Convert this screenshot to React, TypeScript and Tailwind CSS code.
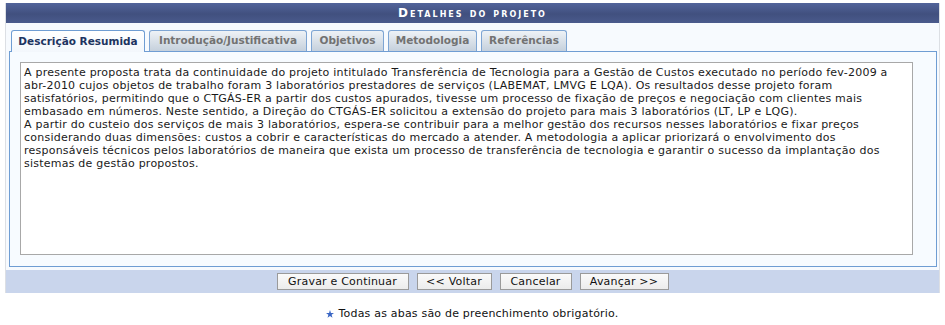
import React from "react";

const lines = [
  "A presente proposta trata da continuidade do projeto intitulado Transferência de Tecnologia para a Gestão de Custos executado no período fev-2009 a",
  "abr-2010 cujos objetos de trabalho foram 3 laboratórios prestadores de serviços (LABEMAT, LMVG E LQA). Os resultados desse projeto foram",
  "satisfatórios, permitindo que o CTGÁS-ER a partir dos custos apurados, tivesse um processo de fixação de preços e negociação com clientes mais",
  "embasado em números. Neste sentido, a Direção do CTGÁS-ER solicitou a extensão do projeto para mais 3 laboratórios (LT, LP e LQG).",
  "A partir do custeio dos serviços de mais 3 laboratórios, espera-se contribuir para a melhor gestão dos recursos nesses laboratórios e fixar preços",
  "considerando duas dimensões: custos a cobrir e características do mercado a atender. A metodologia a aplicar priorizará o envolvimento dos",
  "responsáveis técnicos pelos laboratórios de maneira que exista um processo de transferência de tecnologia e garantir o sucesso da implantação dos",
  "sistemas de gestão propostos.",
];

const tabs = [
  { label: "Descrição Resumida", w: 134 },
  { label: "Introdução/Justificativa", w: 158 },
  { label: "Objetivos", w: 73 },
  { label: "Metodologia", w: 89 },
  { label: "Referências", w: 86 },
];

function Btn({ children, w }: { children: React.ReactNode; w: number }) {
  return (
    <button
      style={{ width: w }}
      className="h-[17px] border border-[#9a9a9a] bg-[linear-gradient(#fafafa,#ececec)] text-[11px] tracking-[0.2px] leading-[15px] text-[#111] px-0"
    >
      {children}
    </button>
  );
}

export default function App() {
  return (
    <div className="bg-white w-[945px] h-[325px] font-['DejaVu_Sans',Verdana,sans-serif] pt-[3px]">
      <div className="ml-[5px] w-[935px] border-x border-[#dcdfe4]">
        <div className="h-[20px] bg-[linear-gradient(#52649a,#41507f_55%,#4a5a8c)] flex items-center justify-center text-white font-bold text-[12px] tracking-[2px] [font-variant:small-caps]">
          Detalhes do projeto
        </div>
        <div className="bg-[#f7fafe] pt-[7px] pl-[3px] pr-[2px] pb-[3px]">
          <div className="flex gap-[4px] pl-[2px] h-[21px] items-end">
            {tabs.map((t, i) => (
              <div
                key={t.label}
                style={{ width: t.w }}
                className={
                  i === 0
                    ? "h-[22px] -mb-px relative z-10 rounded-t-[3px] border border-b-0 border-[#6f9dd3] bg-[linear-gradient(#ffffff,#f3f7fc)] text-[#1d3461] font-bold text-[10.5px] flex items-center justify-center"
                    : "h-[21px] rounded-t-[3px] border border-b-0 border-[#7ea5d3] bg-[linear-gradient(#eef2f6,#c5d0dc)] text-[#727272] font-bold text-[10.5px] flex items-center justify-center"
                }
              >
                {t.label}
              </div>
            ))}
          </div>
          <div className="border border-[#6f9dd3] bg-[#f7fbff] pt-[10px] pl-[10px] pb-[11px] h-[216px]">
            <div className="w-[893px] h-[193px] border border-[#a8a8a8] bg-white pl-[3px] pt-[3px] text-[11px] tracking-[0.23px] leading-[13px] text-[#1a1a1a] overflow-hidden">
              {lines.map((l, i) => (
                <div key={i} className="whitespace-nowrap">
                  {l}
                </div>
              ))}
            </div>
          </div>
        </div>
        <div className="h-[23px] bg-[#c9d5ec] flex items-center justify-center gap-[8px]">
          <Btn w={132}>Gravar e Continuar</Btn>
          <Btn w={75}>&lt;&lt; Voltar</Btn>
          <Btn w={72}>Cancelar</Btn>
          <Btn w={89}>Avançar &gt;&gt;</Btn>
        </div>
      </div>
      <div className="mt-[13px] flex items-center justify-center text-[11px] tracking-[0.2px] text-[#111] gap-[4px]">
        <svg width="8" height="8" viewBox="0 0 10 10">
          <polygon
            points="5,0 6.2,3.6 10,3.7 7,6 8.1,9.7 5,7.5 1.9,9.7 3,6 0,3.7 3.8,3.6"
            fill="#3a66c4"
          />
        </svg>
        <span>Todas as abas são de preenchimento obrigatório.</span>
      </div>
    </div>
  );
}
